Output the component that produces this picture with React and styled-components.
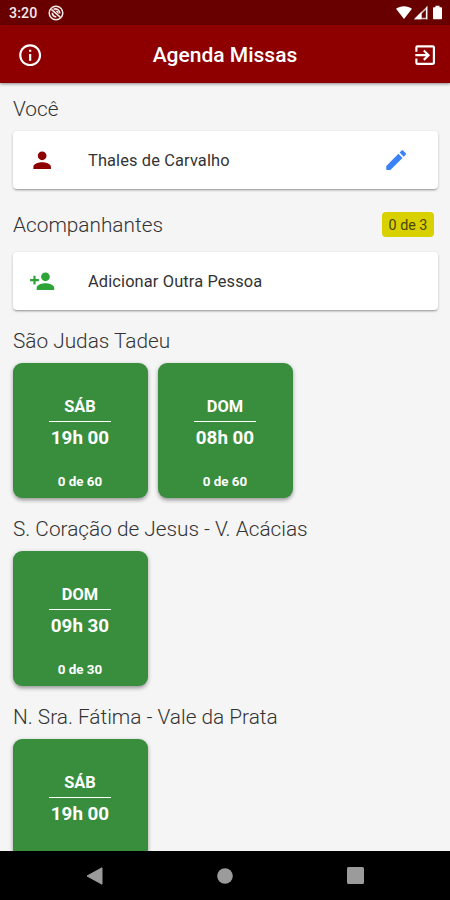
import styled, { createGlobalStyle } from "styled-components"
import { MdEdit, MdExitToApp, MdInfoOutline, MdPerson, MdPersonAdd } from "react-icons/md"

const GlobalStyle = createGlobalStyle`
*{box-sizing:border-box;}
body{
margin:0;
font-family:Roboto, "Liberation Sans", sans-serif;
}
`;

const Screen = styled.div`
width:100%;
height:100vh;
display:flex;
flex-direction:column;
background-color:#f5f5f5;
overflow:hidden;
`;

const StatusBar = styled.div`
height:25px;
flex-shrink:0;
display:flex;
align-items:center;
padding:1px 6px 0 9px;
background-color:#690000;
color:#f6eaea;
`;

const Clock = styled.span`
font-size:14.2px;
font-weight:500;
line-height:24px;
letter-spacing:0.1px;
width:39px;
`;

const StatusIcons = styled.div`
display:flex;
align-items:center;
margin-left:auto;
`;

const AppBar = styled.header`
height:58px;
flex-shrink:0;
display:flex;
align-items:center;
justify-content:space-between;
padding:2px 12px 0 17px;
background-color:#8e0000;
color:#fff;
z-index:1;
box-shadow:0 1px 3px rgba(0,0,0,0.45);
`;

const Title = styled.h1`
margin:0;
padding-right:5px;
font-size:21px;
font-weight:500;
line-height:28px;
`;

const IconButton = styled.button`
display:flex;
padding:0;
border:none;
background-color:transparent;
color:${props => props.$color || "#fff"};
cursor:pointer;
`;

const Content = styled.main`
flex:1;
min-height:0;
overflow:hidden;
padding:0 12px 0 13px;
`;

const Heading = styled.div`
display:flex;
align-items:flex-end;
justify-content:space-between;
height:${props => props.$height || 53}px;
padding:0 4px ${props => props.$bottom || 8}px 0;
`;

const HeadingText = styled.h2`
margin:0;
font-size:20.8px;
font-weight:300;
line-height:28px;
color:#333;
white-space:nowrap;
`;

const Badge = styled.span`
width:52px;
height:25px;
margin-bottom:2px;
padding-top:1px;
display:flex;
align-items:center;
justify-content:center;
border-radius:4px;
background-color:#d9d000;
color:#4a4600;
font-size:14.3px;
`;

const Card = styled.div`
height:58px;
display:flex;
align-items:center;
padding:0 29px 0 16px;
border-radius:4px;
background-color:#fff;
box-shadow:0 2px 2px -1px rgba(0,0,0,0.25), 0 1px 3px rgba(0,0,0,0.2);
`;

const CardIcon = styled.span`
display:flex;
width:59px;
color:${props => props.$color};
`;

const CardText = styled.span`
flex:1;
padding-top:1px;
font-size:16.4px;
letter-spacing:0.13px;
line-height:24px;
color:#333;
`;

const Tiles = styled.div`
display:flex;
gap:10px;
`;

const Tile = styled.button`
width:135px;
height:135px;
display:flex;
flex-direction:column;
align-items:center;
padding:33px 1px 0 0;
border:none;
border-radius:9px;
background-color:#388e3c;
color:#fff;
font-family:inherit;
font-weight:700;
box-shadow:0 3px 4px -1px rgba(0,0,0,0.3), 0 1px 5px rgba(0,0,0,0.18);
cursor:pointer;
`;

const Day = styled.span`
width:62px;
font-size:16.4px;
line-height:22px;
height:26px;
border-bottom:1px solid #fff;
`;

const Hour = styled.span`
margin-top:4px;
font-size:18.8px;
line-height:24px;
`;

const Seats = styled.span`
margin-top:23px;
font-size:13.4px;
line-height:18px;
`;

const NavBar = styled.nav`
height:49px;
flex-shrink:0;
display:flex;
align-items:center;
justify-content:space-between;
padding:0 86px 0 85px;
background-color:#000;
z-index:1;
`;

const churches = [
  { name: "São Judas Tadeu", masses: [
    { day: "SÁB", hour: "19h 00", seats: "0 de 60" },
    { day: "DOM", hour: "08h 00", seats: "0 de 60" },
  ]},
  { name: "S. Coração de Jesus - V. Acácias", masses: [
    { day: "DOM", hour: "09h 30", seats: "0 de 30" },
  ]},
  { name: "N. Sra. Fátima - Vale da Prata", masses: [
    { day: "SÁB", hour: "19h 00" },
  ]},
]

const Notification = () => (
  <svg width="16" height="16" viewBox="0 0 16 16" fill="none" stroke="currentColor">
    <circle cx="8" cy="8" r="6.8" strokeWidth="1.5" />
    <path d="M3.4 4.4l8.8 7.8" strokeWidth="1.6" />
    <path d="M5.6 4.2c3-1.2 6.2.9 6.2 4.3M4.3 7.8c.1 2.4 1.7 3.9 4 4" strokeWidth="1.7" />
    <path d="M7.2 5.4l3.2.9.2 2.9z" fill="currentColor" stroke="none" />
  </svg>
)

const Signals = () => (
  <svg width="48" height="16" viewBox="0 0 48 16" fill="#fff">
    <path d="M0 3.8C4.3.4 11.7.4 16 3.8L8 14z" />
    <path d="M31.3 1v13.3H18z" fill="#d9bcbc" />
    <path d="M29.8 4.7v8.1h-4.3V9z" fill="#690000" />
    <path d="M31.3 1v13.3h-1.2V2.3zM18 14.3l7.5-7.5v7.5z" />
    <path d="M39.5 2.2V.8h4v1.4h1.7c.5 0 .8.3.8.8v10.5c0 .5-.3.8-.8.8h-7.4c-.5 0-.8-.3-.8-.8V3c0-.5.3-.8.8-.8z" />
  </svg>
)

export const App = () => {
  return (
    <Screen>
      <GlobalStyle />
      <StatusBar>
        <Clock>3:20</Clock>
        <Notification />
        <StatusIcons>
          <Signals />
        </StatusIcons>
      </StatusBar>
      <AppBar>
        <IconButton aria-label="Informações"><MdInfoOutline size={26.3} /></IconButton>
        <Title>Agenda Missas</Title>
        <IconButton aria-label="Sair"><MdExitToApp size={26.3} /></IconButton>
      </AppBar>

      <Content>
        <Heading $height={48}>
          <HeadingText>Você</HeadingText>
        </Heading>
        <Card>
          <CardIcon $color="#8e0000"><MdPerson size={26.3} /></CardIcon>
          <CardText>Thales de Carvalho</CardText>
          <IconButton $color="#3b82f6" aria-label="Editar"><MdEdit size={26.3} /></IconButton>
        </Card>

        <Heading $height={63} $bottom={13}>
          <HeadingText>Acompanhantes</HeadingText>
          <Badge>0 de 3</Badge>
        </Heading>
        <Card>
          <CardIcon $color="#2ea336"><MdPersonAdd size={26.3} /></CardIcon>
          <CardText>Adicionar Outra Pessoa</CardText>
        </Card>

        {churches.map(church => (
          <section key={church.name}>
            <Heading>
              <HeadingText>{church.name}</HeadingText>
            </Heading>
            <Tiles>
              {church.masses.map(mass => (
                <Tile key={mass.day}>
                  <Day>{mass.day}</Day>
                  <Hour>{mass.hour}</Hour>
                  {mass.seats ? <Seats>{mass.seats}</Seats> : null}
                </Tile>
              ))}
            </Tiles>
          </section>
        ))}
      </Content>

      <NavBar>
        <svg width="18" height="18" viewBox="0 0 18 18" fill="#9b9b9b">
          <path d="M17 .8v16.4L2 9z" stroke="#9b9b9b" strokeLinejoin="round" />
        </svg>
        <svg width="16" height="16" viewBox="0 0 16 16" fill="#9b9b9b">
          <circle cx="8" cy="8" r="7.8" />
        </svg>
        <svg width="17" height="17" viewBox="0 0 17 17" fill="#9b9b9b">
          <rect width="17" height="17" rx="1.5" />
        </svg>
      </NavBar>
    </Screen>
  )
}

export default App
